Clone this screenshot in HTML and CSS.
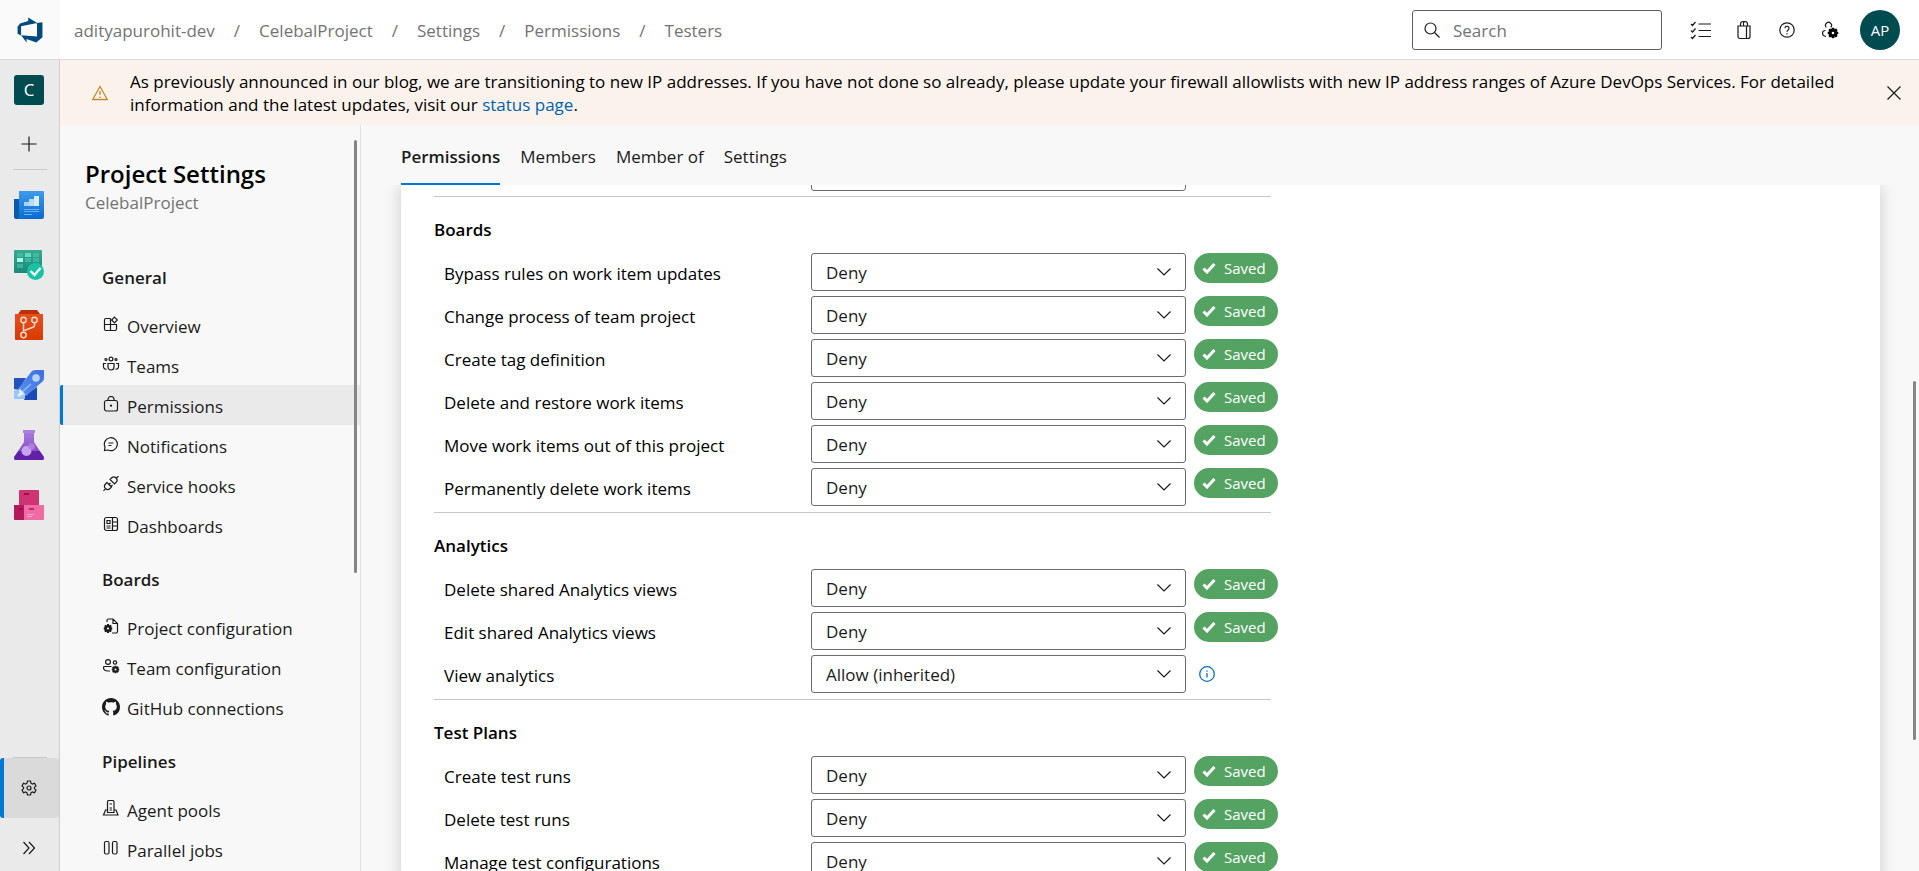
FILE: index.html
```html
<!DOCTYPE html>
<html lang="en">
<head>
<meta charset="utf-8">
<title>Permissions - Project Settings</title>
<link rel="stylesheet" href="styles.css">
</head>
<body>
<svg class="sprite" aria-hidden="true">
  <defs>
    <linearGradient id="g-blue" x1="0" y1="0" x2="0" y2="1"><stop offset="0" stop-color="#3e9ceb"/><stop offset="1" stop-color="#0a6bcf"/></linearGradient>
    <linearGradient id="g-green" x1="0" y1="0" x2="0" y2="1"><stop offset="0" stop-color="#38a893"/><stop offset="1" stop-color="#1a8a78"/></linearGradient>
    <linearGradient id="g-orange" x1="0" y1="0" x2="0" y2="1"><stop offset="0" stop-color="#e6501f"/><stop offset="1" stop-color="#d83b01"/></linearGradient>
    <linearGradient id="g-purple" x1="0" y1="0" x2="0" y2="1"><stop offset="0" stop-color="#a678d8"/><stop offset="1" stop-color="#7d3cc0"/></linearGradient>
    <linearGradient id="g-rocket" x1="1" y1="0" x2="0" y2="1"><stop offset="0" stop-color="#3a6fe0"/><stop offset="1" stop-color="#5a93f2"/></linearGradient>
  </defs>
  <symbol id="i-chevron" viewBox="0 0 16 16"><path d="M1.500 4.500 8 11l6.500-6.500"/></symbol>
  <symbol id="i-check" viewBox="0 0 14 12"><path d="m1.500 6.500 3.500 3.500L12.500 2"/></symbol>
  <symbol id="i-gear" viewBox="0 0 16 16"><path d="M6.500 1h3l.5 2.200 1.400.8 2.100-.7L15 5.900l-1.600 1.500v1.200L15 10.100l-1.500 2.600-2.100-.7-1.400.8L9.500 15h-3L6 12.800 4.600 12l-2.100.7L1 10.100l1.600-1.500V7.400L1 5.900l1.500-2.600 2.100.7L6 3.200z"/><circle cx="8" cy="8" r="2"/></symbol>
  <symbol id="i-minigear" viewBox="0 0 10 10"><path fill="currentColor" fill-rule="evenodd" stroke="none" d="M4 0h2l.4 1.500 1.400-.7 1.400 1.500-.8 1.300L10 4v2l-1.500.4.7 1.400-1.500 1.400-1.300-.8L6 10H4l-.4-1.500-1.400.7L.8 7.700l.8-1.300L0 6V4l1.500-.4-.7-1.400L2.300.8l1.300.8zM5 3.800a1.200 1.200 0 1 0 0 2.400 1.200 1.200 0 0 0 0-2.400z"/></symbol>
</svg>

<header class="topbar">
  <a class="logo" href="#" aria-label="Azure DevOps">
    <svg width="28" height="28" viewBox="0 0 18 18"><path fill="#004a80" d="M17 4v9.740l-4 3.280-6.200-2.260V17l-3.510-4.590 10.230.8V4.440zm-3.410.49L7.850 1v2.290L2.580 4.840 1 6.870v4.610l2.260 1V6.570z"/></svg>
  </a>
  <nav class="crumbs" aria-label="Breadcrumb">
    <a href="#">adityapurohit-dev</a><span>/</span><a href="#">CelebalProject</a><span>/</span><a href="#">Settings</a><span>/</span><a href="#">Permissions</a><span>/</span><a href="#">Testers</a>
  </nav>
  <label class="search">
    <svg class="line" width="16" height="16" viewBox="0 0 16 16"><circle cx="6.500" cy="6.500" r="5.500"/><path d="m10.500 10.500 5 5"/></svg>
    <input type="search" placeholder="Search" aria-label="Search">
  </label>
  <div class="actions">
    <button type="button" aria-label="Work items"><svg class="line" width="22" height="20" viewBox="0 0 22 20"><path d="M8.500 4H21M8.500 10.500H21M8.500 16.500H21M1 4l1.500 1.500L5.500 2M1 10.500 2.500 12l3-3.500M1 17l1.500 1.500L5.500 15"/></svg></button>
    <button type="button" aria-label="Marketplace"><svg class="line" width="16" height="20" viewBox="0 0 16 20"><path d="M2 6h12v10.500a2 2 0 0 1-2 2H4a2 2 0 0 1-2-2zM10.500 6v12.500M4.500 6V4A2.500 2.500 0 0 1 7 1.500h2A2.500 2.500 0 0 1 11.500 4v2M7.500 6V4a2 2 0 0 1 1.500-2.500"/></svg></button>
    <button type="button" aria-label="Help"><svg class="line" width="16" height="16" viewBox="0 0 16 16"><circle cx="8" cy="8" r="7.200"/><path d="M6 6.300a2 2 0 1 1 3.200 1.600C8.400 8.500 8 8.800 8 9.700M8 11.200v1.200"/></svg></button>
    <button type="button" aria-label="User settings"><svg class="line" width="18" height="18" viewBox="0 0 18 18"><path d="M5.200 6.300a3 3 0 1 1 4.600 0M5 15.500Q1.500 15 1.500 12 1.500 9.500 4.500 9.500"/><use href="#i-minigear" x="6.500" y="6.500" width="11" height="11"/></svg></button>
  </div>
  <button class="avatar" type="button" aria-label="Account">AP</button>
</header>

<div class="shell">
  <nav class="rail" aria-label="Project">
    <a class="rail-item" href="#" aria-label="CelebalProject"><span class="project">C</span></a>
    <button class="rail-item rail-add" type="button" aria-label="Add"><svg class="line" width="16" height="16" viewBox="0 0 16 16"><path d="M8 .5v15M.5 8h15"/></svg></button>
    <hr>
    <a class="rail-item" href="#" aria-label="Overview"><svg width="30" height="30" viewBox="0 0 30 30"><path fill="#0a5aa8" d="M0 9h6v20H2a2 2 0 0 1-2-2z"/><path fill="url(#g-blue)" d="M5 1h24a1 1 0 0 1 1 1v25a2 2 0 0 1-2 2H3q2-1 2-3z"/><path fill="#a6d3fb" d="M10 12h5v4h-5z"/><path fill="#b8dcfc" d="M15 9h5v7h-5z"/><path fill="#d9edff" d="M20 6h5v10h-5z"/><path fill="#66b4f5" d="M10 19h15v1H10zM10 21h15v1H10zM10 24h8v1h-8z"/></svg></a>
    <a class="rail-item" href="#" aria-label="Boards"><svg width="30" height="30" viewBox="0 0 30 30"><rect width="28" height="23" rx="1" fill="url(#g-green)"/><path fill="#4fd1b5" d="M3 3h6v4H3zM19 3h6v4h-6zM3 14h6v4H3zM11 8h6v4h-6zM19 8h6v4h-6z" opacity=".5"/><path fill="#5fdcc0" d="M11 3h6v4h-6z"/><path fill="#a5ffe8" d="M3 8h6v4H3z"/><circle cx="21.500" cy="21.500" r="8.500" fill="#17c3a5"/><path fill="none" stroke="#fff" stroke-width="2.400" d="m16.500 21 4 4L26.500 18"/></svg></a>
    <a class="rail-item" href="#" aria-label="Repos"><svg width="30" height="30" viewBox="0 0 30 30"><path fill="#b83204" d="M7 0h16l3 4H4z"/><path fill="url(#g-orange)" d="M1 4h28v25a1 1 0 0 1-1 1H2a1 1 0 0 1-1-1z"/><g fill="none" stroke="#ffd9c9" stroke-width="1.500"><circle cx="9.500" cy="10" r="2.700"/><circle cx="20.500" cy="10" r="2.700"/><circle cx="9.500" cy="25" r="2.700"/><path d="M9.500 13v9M20.500 13v2.500q0 1-1 1.500l-9 3.500"/></g></svg></a>
    <a class="rail-item" href="#" aria-label="Pipelines"><svg width="30" height="30" viewBox="0 0 30 30"><path fill="#2453bd" d="M0 8h12l-7 12-5-1z"/><path fill="#1b49b5" d="M23 17v13H10l1-5z"/><path fill="url(#g-rocket)" d="M18 1q2-1 4-1h7a1 1 0 0 1 1 1v7q0 2-1.500 3.500L12 26l-8-7z"/><circle cx="22" cy="8" r="3.800" fill="#b7d2fb"/><path stroke="#9cc0fa" stroke-width="1.200" d="M17 14 7 23"/><path fill="#9cc4ff" d="m3 19 3 3-3 4h2l4-2 2 2v3H0v-8z"/><path fill="#eaf2ff" d="m5 18 7 7-3-1-4 3 1-4z"/></svg></a>
    <a class="rail-item" href="#" aria-label="Test Plans"><svg width="30" height="30" viewBox="0 0 30 30"><path fill="#a982d9" d="M9 0h12v3H9z"/><path fill="url(#g-purple)" d="M10 3h10v9l9.500 14.500Q31 30 27 30H3q-4 0-2.500-3.500L10 12z"/><path fill="#6222a8" d="M4.500 21h21l4 5.500Q31 30 27 30H3q-4 0-2.500-3.500z"/><circle cx="12.500" cy="21" r="5" fill="#c9a2f0"/><circle cx="17.500" cy="16.500" r="3.200" fill="#b083e2" opacity=".9"/></svg></a>
    <a class="rail-item" href="#" aria-label="Artifacts"><svg width="30" height="30" viewBox="0 0 30 30"><path fill="#cf3374" d="M5 1q0-1 1-1h18q1 0 1 1v14H5z"/><path fill="#b4195c" d="M0 15h10v15H1q-1 0-1-1z"/><path fill="#ee6ba3" d="M10 15h20v14q0 1-1 1H10z"/><path fill="#9c114b" d="M10 3h5v2h-5zM5 18h4v2H5z"/><path fill="#c42a6d" d="M15 18h5v2h-5z"/><path stroke="#f8a6ca" stroke-width="1" d="M13 24.500h7M13 26.500h5"/></svg></a>
    <div class="rail-space"></div>
    <hr class="rail-end">
    <a class="rail-item rail-active" href="#" aria-label="Project settings"><svg class="line" width="16" height="16"><use href="#i-gear"/></svg></a>
    <button class="rail-item rail-expand" type="button" aria-label="Expand"><svg class="line" width="14" height="14" viewBox="0 0 14 14"><path d="m1.500 1 5.500 6-5.500 6M7 1l5.500 6L7 13"/></svg></button>
  </nav>

  <div class="page">
    <div class="banner" role="status">
      <svg class="warn" width="16" height="16" viewBox="0 0 16 16"><path d="M8 1.500 15.300 14.500H.7zM8 6v4M8 11.500v1.500"/></svg>
      <p>As previously announced in our blog, we are transitioning to new IP addresses. If you have not done so already, please update your firewall allowlists with new IP address ranges of Azure DevOps Services. For detailed information and the latest updates, visit our <a href="#">status page</a>.</p>
      <button type="button" aria-label="Dismiss"><svg class="line" width="14" height="14" viewBox="0 0 14 14"><path d="m.5.5 13 13M13.500.5l-13 13"/></svg></button>
    </div>

    <div class="columns">
      <aside class="settings">
        <h1>Project Settings</h1>
        <p class="sub">CelebalProject</p>
        <nav aria-label="Project settings">
          <h2>General</h2>
          <a href="#"><svg class="line" width="18" height="16" viewBox="0 0 18 16"><path d="M8.500 2.500H4A1.500 1.500 0 0 0 2.500 4v9A1.500 1.500 0 0 0 4 14.500h9a1.500 1.500 0 0 0 1.500-1.500V8.500h-12M8.500 2.500v12M12.500 1.200l2.800 2.800-2.800 2.800L9.700 4z"/></svg>Overview</a>
          <a href="#"><svg class="line" width="18" height="16" viewBox="0 0 18 16"><circle cx="9" cy="3" r="1.900"/><circle cx="4" cy="3.500" r="1"/><circle cx="14" cy="3.500" r="1"/><path d="M6 7.500h6V11a3 3 0 0 1-6 0zM4 7.500H1.500V11A2.500 2.500 0 0 0 4.500 13.200M14 7.500h2.500V11a2.500 2.500 0 0 1-3 2.200"/></svg>Teams</a>
          <a href="#" class="current" aria-current="page"><svg class="line" width="18" height="16" viewBox="0 0 18 16"><rect x="2.500" y="4.500" width="13" height="10.500" rx="2"/><path d="M6 4.500V3.500a3 3 0 0 1 6 0v1"/><circle cx="9" cy="9.700" r=".5"/></svg>Permissions</a>
          <a href="#"><svg class="line" width="18" height="16" viewBox="0 0 18 16"><path d="M2.500 14.500 3 11A6.500 6.500 0 1 1 6 14zM6.500 7h5M6.500 9.500h3"/></svg>Notifications</a>
          <a href="#"><svg class="line" width="18" height="16" viewBox="0 0 18 16"><path d="m8 3.500 1.500-1.500a3 3 0 0 1 4.500 4.500L12.500 8zM5 6.500l4.500 4.500L8 12.500A3.100 3.100 0 0 1 3.500 8zM14 2.500 16.500 0M3.500 12.500 1.500 15M7 8.500l1.500-1.500M9 10.500 10.500 9"/></svg>Service hooks</a>
          <a href="#"><svg class="line" width="18" height="16" viewBox="0 0 18 16"><rect x="2.500" y="1.500" width="13" height="13" rx="2"/><path d="M10.500 1.500v13M10.500 6h5M10.500 10h5M5 4.500h3v3H5zM4.500 10H8.500M4.500 12H8.500"/></svg>Dashboards</a>
          <h2>Boards</h2>
          <a href="#"><svg class="line" width="18" height="16" viewBox="0 0 18 16"><path d="M5 4V2.500A1.500 1.500 0 0 1 6.500 1H11l4.500 4.500v8A1.500 1.500 0 0 1 14 15h-4M11 1v4.500h4.500"/><use href="#i-minigear" x="1.500" y="6" width="9" height="9"/></svg>Project configuration</a>
          <a href="#"><svg class="line" width="18" height="16" viewBox="0 0 18 16"><circle cx="6" cy="4" r="2.400"/><circle cx="13" cy="4.500" r="1.700"/><path d="M9.500 8.500h-7A1 1 0 0 0 1.500 9.500Q1.500 13 6 13H8"/><use href="#i-minigear" x="9.500" y="7.500" width="8" height="8"/></svg>Team configuration</a>
          <a href="#"><svg width="18" height="18" viewBox="0 0 16 16"><path fill="#1b1b1b" d="M8 0C3.580 0 0 3.580 0 8c0 3.540 2.290 6.530 5.470 7.590.4.070.55-.17.55-.38 0-.19-.01-.82-.01-1.490-2.010.37-2.530-.49-2.690-.94-.09-.23-.48-.94-.82-1.130-.28-.15-.68-.52-.01-.53.63-.01 1.080.58 1.230.82.72 1.210 1.870.87 2.330.66.070-.52.28-.87.51-1.070-1.780-.2-3.640-.89-3.640-3.950 0-.87.31-1.590.82-2.150-.08-.2-.36-1.020.08-2.120 0 0 .67-.21 2.200.82.640-.18 1.320-.27 2-.27s1.360.09 2 .27c1.530-1.040 2.200-.82 2.200-.82.440 1.100.16 1.920.08 2.120.51.56.82 1.270.82 2.150 0 3.070-1.870 3.750-3.650 3.950.29.25.54.73.54 1.480 0 1.070-.01 1.930-.01 2.200 0 .21.15.46.55.38A8.010 8.010 0 0 0 16 8c0-4.420-3.580-8-8-8z"/></svg>GitHub connections</a>
          <h2>Pipelines</h2>
          <a href="#"><svg class="line" width="18" height="16" viewBox="0 0 18 16"><path d="M5.500 12.500V2A1.500 1.500 0 0 1 7 .5h3.500A1.500 1.500 0 0 1 12 2v10.500zM5.500 10H3.500l-2 5h14.500L14 10h-2M7.500 4h2.500M7.500 8h2.500M7.500 10h2.500"/></svg>Agent pools</a>
          <a href="#"><svg class="line" width="18" height="16" viewBox="0 0 18 16"><rect x="2.500" y="1.500" width="4.500" height="12.500" rx="1.500"/><rect x="10.500" y="1.500" width="4.500" height="12.500" rx="1.500"/></svg>Parallel jobs</a>
        </nav>
        <span class="thumb"></span>
      </aside>

      <main>
        <nav class="tabs" aria-label="Group">
          <a class="selected" href="#" aria-current="page">Permissions</a><a href="#">Members</a><a href="#">Member of</a><a href="#">Settings</a>
        </nav>
        <div class="scroller">
          <div class="card">
            <section class="clipped">
              <div class="row"><span class="pick"><select aria-label="Previous permission"><option>&nbsp;</option></select></span></div>
            </section>
            <section>
              <h3>Boards</h3>
              <div class="row"><label for="p1">Bypass rules on work item updates</label><span class="pick"><select id="p1"><option>Deny</option></select><svg class="line" width="16" height="16"><use href="#i-chevron"/></svg></span><span class="saved"><svg width="14" height="12"><use href="#i-check"/></svg>Saved</span></div>
              <div class="row"><label for="p2">Change process of team project</label><span class="pick"><select id="p2"><option>Deny</option></select><svg class="line" width="16" height="16"><use href="#i-chevron"/></svg></span><span class="saved"><svg width="14" height="12"><use href="#i-check"/></svg>Saved</span></div>
              <div class="row"><label for="p3">Create tag definition</label><span class="pick"><select id="p3"><option>Deny</option></select><svg class="line" width="16" height="16"><use href="#i-chevron"/></svg></span><span class="saved"><svg width="14" height="12"><use href="#i-check"/></svg>Saved</span></div>
              <div class="row"><label for="p4">Delete and restore work items</label><span class="pick"><select id="p4"><option>Deny</option></select><svg class="line" width="16" height="16"><use href="#i-chevron"/></svg></span><span class="saved"><svg width="14" height="12"><use href="#i-check"/></svg>Saved</span></div>
              <div class="row"><label for="p5">Move work items out of this project</label><span class="pick"><select id="p5"><option>Deny</option></select><svg class="line" width="16" height="16"><use href="#i-chevron"/></svg></span><span class="saved"><svg width="14" height="12"><use href="#i-check"/></svg>Saved</span></div>
              <div class="row"><label for="p6">Permanently delete work items</label><span class="pick"><select id="p6"><option>Deny</option></select><svg class="line" width="16" height="16"><use href="#i-chevron"/></svg></span><span class="saved"><svg width="14" height="12"><use href="#i-check"/></svg>Saved</span></div>
            </section>
            <section>
              <h3>Analytics</h3>
              <div class="row"><label for="p7">Delete shared Analytics views</label><span class="pick"><select id="p7"><option>Deny</option></select><svg class="line" width="16" height="16"><use href="#i-chevron"/></svg></span><span class="saved"><svg width="14" height="12"><use href="#i-check"/></svg>Saved</span></div>
              <div class="row"><label for="p8">Edit shared Analytics views</label><span class="pick"><select id="p8"><option>Deny</option></select><svg class="line" width="16" height="16"><use href="#i-chevron"/></svg></span><span class="saved"><svg width="14" height="12"><use href="#i-check"/></svg>Saved</span></div>
              <div class="row"><label for="p9">View analytics</label><span class="pick"><select id="p9"><option>Allow (inherited)</option></select><svg class="line" width="16" height="16"><use href="#i-chevron"/></svg></span><button class="info" type="button" aria-label="Inheritance details"><svg width="16" height="16" viewBox="0 0 16 16"><circle cx="8" cy="8" r="7.300"/><path d="M8 7v4.500M8 4.500v1.300"/></svg></button></div>
            </section>
            <section>
              <h3>Test Plans</h3>
              <div class="row"><label for="p10">Create test runs</label><span class="pick"><select id="p10"><option>Deny</option></select><svg class="line" width="16" height="16"><use href="#i-chevron"/></svg></span><span class="saved"><svg width="14" height="12"><use href="#i-check"/></svg>Saved</span></div>
              <div class="row"><label for="p11">Delete test runs</label><span class="pick"><select id="p11"><option>Deny</option></select><svg class="line" width="16" height="16"><use href="#i-chevron"/></svg></span><span class="saved"><svg width="14" height="12"><use href="#i-check"/></svg>Saved</span></div>
              <div class="row"><label for="p12">Manage test configurations</label><span class="pick"><select id="p12"><option>Deny</option></select><svg class="line" width="16" height="16"><use href="#i-chevron"/></svg></span><span class="saved"><svg width="14" height="12"><use href="#i-check"/></svg>Saved</span></div>
            </section>
          </div>
          <span class="thumb page-thumb"></span>
        </div>
      </main>
    </div>
  </div>
</div>
</body>
</html>
```
FILE: styles.css
```css
* { box-sizing: border-box; }
body {
  margin: 0;
  height: 100vh;
  display: flex;
  flex-direction: column;
  overflow: hidden;
  background: #f8f8f8;
  color: #000;
  font: 17px/24px "Segoe UI", "Open Sans", "Noto Sans", sans-serif;
}
a { color: inherit; text-decoration: none; }
button {
  padding: 0;
  border: 0;
  background: none;
  color: inherit;
  font: inherit;
  display: grid;
  place-items: center;
}
h1, h2, h3, p { margin: 0; }
h1, h2, h3 { font-weight: 600; }
svg { display: block; flex: none; }
.sprite { position: absolute; width: 0; height: 0; }
.line { fill: none; stroke: #1b1b1b; stroke-width: 1.2; }

/* Top bar */
.topbar {
  flex: none;
  display: flex;
  align-items: center;
  height: 60px;
  padding-right: 19px;
  background: #fff;
  border-bottom: 1px solid #dadada;
}
.logo {
  width: 60px;
  height: 59px;
  display: grid;
  place-items: center;
  background: #fafafa;
}
.crumbs { flex: 1; display: flex; gap: 19px; padding: 2px 0 0 14px; color: #737373; }
.search {
  display: flex;
  align-items: center;
  gap: 13px;
  width: 250px;
  height: 40px;
  padding: 0 11px;
  border: 1px solid #5e5e5e;
  border-radius: 3px;
}
.search input {
  flex: 1;
  min-width: 0;
  padding: 2px 0 0;
  border: 0;
  outline: 0;
  background: none;
  font: inherit;
}
.search input::placeholder { color: #737373; opacity: 1; }
.actions { display: flex; margin: 0 9px 0 17px; }
.actions button { width: 43px; height: 40px; }
.avatar {
  width: 40px;
  height: 40px;
  border-radius: 50%;
  background: #004b50;
  color: #fff;
  font-size: 15px;
}

/* Left rail */
.shell { flex: 1; min-height: 0; display: flex; }
.rail {
  flex: none;
  display: flex;
  flex-direction: column;
  width: 60px;
  background: #eaeaea;
  border-right: 1px solid #cfcfcf;
}
.rail-item { flex: none; height: 60px; width: 100%; padding-right: 1px; display: grid; place-items: center; }
.rail-add { height: 48px; }
.rail hr { flex: none; width: 34px; height: 1px; margin: 1px auto 5px; border: 0; background: #c8c8c8; }
.rail .rail-end { margin: 0 auto; }
.rail-space { flex: 1; }
.rail-active { background: #dadada; border-left: 4px solid #0078d4; border-radius: 3px; padding-right: 5px; }
.rail-expand { height: 53px; padding-top: 7px; }
.project {
  width: 30px;
  height: 30px;
  border-radius: 3px;
  background: #004b50;
  color: #fff;
  text-align: center;
  line-height: 30px;
}

/* Announcement */
.page { flex: 1; min-width: 0; display: flex; flex-direction: column; }
.banner {
  flex: none;
  display: flex;
  align-items: center;
  gap: 22px;
  padding: 10px 10px 9px 32px;
  background: #fbf2ec;
  line-height: 23px;
}
.banner p { flex: 1; }
.banner a { color: #0062ad; }
.banner button { width: 30px; height: 30px; }
.warn { fill: none; stroke: #c18b2f; stroke-width: 1.3; }

/* Settings list */
.columns { flex: 1; min-height: 0; display: flex; }
.settings {
  position: relative;
  flex: none;
  width: 301px;
  padding-top: 33px;
  overflow: hidden;
  border-right: 1px solid #e1e1e1;
  color: #1b1b1b;
}
.settings h1 { padding-left: 25px; color: #000; font-size: 24px; line-height: 32px; }
.sub { padding: 1px 0 0 25px; margin-bottom: 28px; color: #737373; }
.settings h2 { height: 62px; padding-left: 42px; font-size: 17px; line-height: 70px; }
.settings nav a { display: flex; gap: 7px; height: 40px; padding-left: 39px; border-left: 3px solid transparent; line-height: 43px; }
.settings nav svg { width: 18px; margin-top: 11px; }
.settings nav .current { border-color: #0078d4; border-radius: 2px 0 0 2px; background: #eaeaea; }
.thumb { position: absolute; top: 15px; right: 3px; width: 3px; height: 433px; border-radius: 2px; background: #868686; }

/* Permissions */
main { flex: 1; min-width: 0; display: flex; flex-direction: column; }
.tabs { flex: none; display: flex; gap: 20px; height: 60px; padding-left: 40px; color: #1b1b1b; line-height: 64px; }
.tabs .selected { font-weight: 600; border-bottom: 2px solid #0078d4; }
.scroller { position: relative; flex: 1; min-height: 0; padding: 0 39px 0 40px; overflow: hidden; }
.card { padding: 0 33px; background: #fff; box-shadow: 0 0 16px rgba(0, 0, 0, .18); }
.page-thumb { top: 196px; height: 359px; }
.card section { max-width: 837px; padding-bottom: 6px; border-bottom: 1px solid #c8c8c8; }
.card h3 { height: 56px; font-size: 17px; line-height: 66px; }
.row { display: grid; grid-template-columns: 367px 375px 92px; padding-left: 10px; margin-right: -20px; height: 38px; }
.row + .row { margin-top: 5px; }
.row label { line-height: 41px; }
.card .clipped { height: 12px; padding-bottom: 5px; display: flex; align-items: flex-end; overflow: hidden; }
.pick { position: relative; grid-column: 2; }
.pick select {
  appearance: none;
  width: 100%;
  height: 38px;
  padding: 2px 40px 0 14px;
  border: 1px solid #6b6b6b;
  border-radius: 3px;
  background: #fff;
  color: #1b1b1b;
  font: inherit;
}
.pick svg { position: absolute; right: 14px; top: 11px; pointer-events: none; }
.saved {
  display: flex;
  align-items: center;
  gap: 8px;
  width: 84px;
  height: 30px;
  margin-left: 8px;
  padding-left: 8px;
  border-radius: 15px;
  background: #55a362;
  color: #fff;
  font-size: 15px;
  line-height: 28px;
}
.saved svg { fill: none; stroke: #fff; stroke-width: 3; }
.info { width: 26px; height: 38px; margin-left: 8px; }
.info svg { fill: none; stroke: #0f6cbd; stroke-width: 1.3; }
```
